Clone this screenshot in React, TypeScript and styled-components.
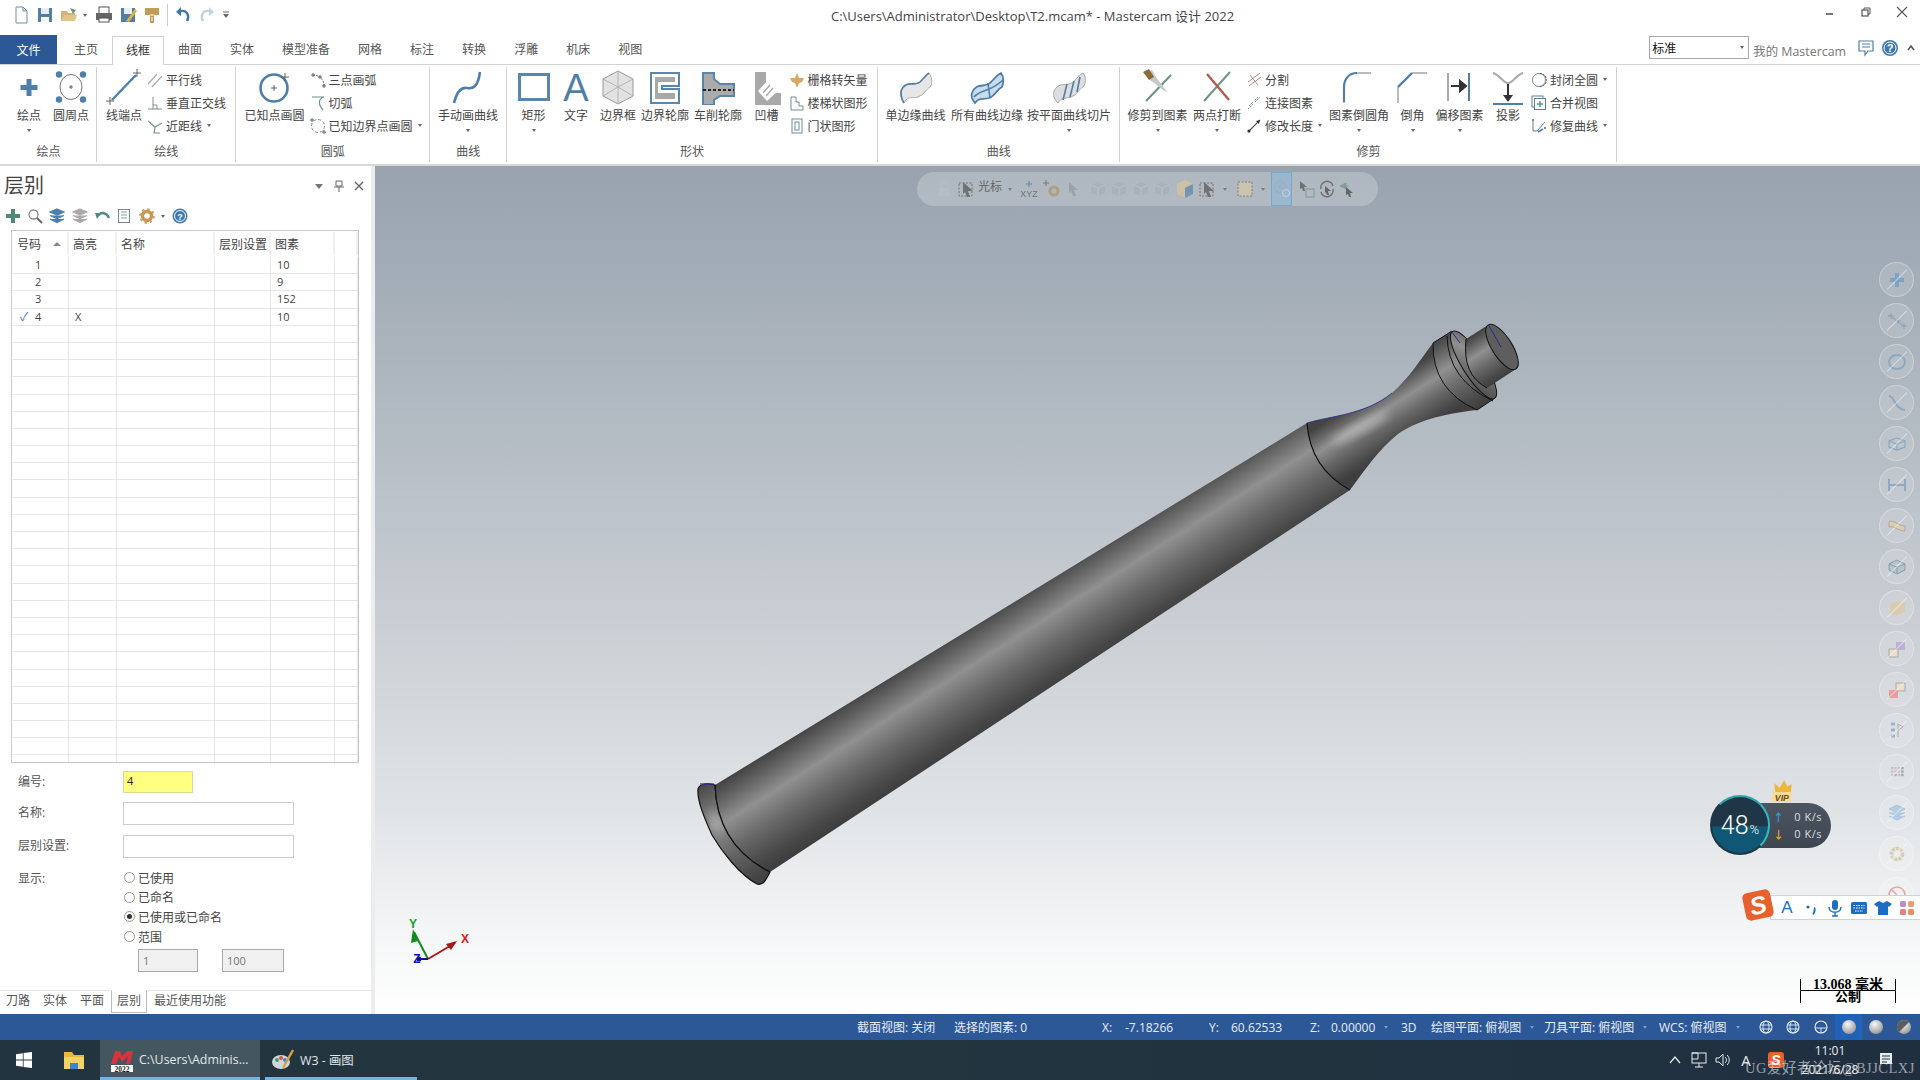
import React from 'react';
import styled, { createGlobalStyle } from 'styled-components';

const Global = createGlobalStyle`
  html, body { margin: 0; padding: 0; background: #fff; }
  * { box-sizing: border-box; }
  #root { width: 1920px; height: 1080px; overflow: hidden; }
`;
const FONT = `"Open Sans", "Noto Sans CJK SC", sans-serif`;

const Root = styled.div`
  width: 1920px; height: 1080px; display: flex; flex-direction: column; overflow: hidden;
  font-family: ${FONT}; font-size: 12px; color: #444; background: #fff;
`;
const TitleBar = styled.div`height: 35px; display: grid; grid-template-columns: 831px 1fr auto; align-items: center;`;
const Quick = styled.div`display: flex; align-items: center; padding-left: 9px; padding-bottom: 5px;`;
const QuickBtn = styled.div<{ $w?: number }>`
  width: ${p => p.$w ?? 24}px; height: 20px; display: flex; align-items: center; justify-content: center;
`;
const QuickSep = styled.div`width: 1px; height: 22px; background: #ccc; margin: 0 3px;`;
const QuickGap = styled.div`width: 3px;`;
const Title = styled.div`font-size: 13px; color: #444; padding-bottom: 5px; white-space: nowrap;`;
const WinCtrls = styled.div`display: flex; padding-bottom: 11px;`;
const WinBtn = styled.div`width: 36px; height: 16px; display: flex; align-items: center; justify-content: center;`;

const TabRow = styled.div`height: 30px; display: flex; align-items: stretch; border-bottom: 1px solid #d2d2d2; position: relative;`;
const FileTab = styled.div`width: 57px; background: #2c5898; color: #fff; display: flex; align-items: center; justify-content: center;`;
const Tabs = styled.div`display: flex; margin-left: 3px;`;
const Tab = styled.div<{ $on?: boolean }>`
  padding: 0 14px 2px; display: flex; align-items: center; white-space: nowrap; color: #555; margin-top: 1px;
  margin-bottom: ${p => (p.$on ? '-1px' : '0')};
  background: #fff;
  ${p => p.$on && 'border: 1px solid #d2d2d2; border-bottom: 0; padding: 0 13px 2px; color:#333;'}
`;
const TabRight = styled.div`margin-left: auto; display: flex; align-items: center;`;
const Combo = styled.div`
  width: 100px; height: 23px; border: 1px solid #a8a8a8; display: flex; align-items: center; justify-content: space-between;
  padding: 0 4px 0 2px; color: #111; margin-top: -4px;
`;
const Caret = styled.span<{ $c?: string }>`
  display: inline-block; width: 0; height: 0; border-left: 2.5px solid transparent; border-right: 2.5px solid transparent;
  border-top: 3px solid ${p => p.$c ?? '#666'};
`;
const MyMc = styled.span`margin: 0 8px 0 4px; font-size: 12.4px; color: #777; padding-top: 2px; white-space: nowrap;`;
const TabIcon = styled.div<{ $w: number }>`width: ${p => p.$w}px; display: flex; justify-content: center; margin-top: -4px;`;

const Ribbon = styled.div`height: 101px; display: flex; border-bottom: 2px solid #d8d8d8; background: #fff;`;
const Group = styled.div<{ $w: number }>`
  width: ${p => p.$w}px; flex: none; display: flex; flex-direction: column; position: relative;
  &::after { content: ''; position: absolute; right: 0; top: 2px; bottom: 2px; width: 1px; background: #d4d4d4; }
`;
const Tools = styled.div<{ $pad?: number }>`height: 79px; display: flex; padding-left: ${p => p.$pad ?? 0}px;`;
const GroupLabel = styled.div`height: 16px; text-align: center; color: #555; line-height: 16px;`;
const Tool = styled.div<{ $w: number }>`
  width: ${p => p.$w}px; flex: none; display: flex; flex-direction: column; align-items: center; padding-top: 4px; white-space: nowrap;
`;
const ToolIcon = styled.div`height: 36px; width: 36px; display: flex; align-items: center; justify-content: center;`;
const ToolLabel = styled.div`height: 16px; line-height: 16px; margin-top: 3px; color: #444;`;
const ToolCaret = styled.div`height: 8px; display: flex; align-items: center; margin-top: 2px;`;
const SmallCol = styled.div<{ $w?: number; $ml?: number }>`
  ${p => p.$w && `width: ${p.$w}px; flex: none;`} margin-left: ${p => p.$ml ?? 0}px; padding-top: 3px; display: flex; flex-direction: column;
`;
const SmallRow = styled.div`height: 23px; display: flex; align-items: center; white-space: nowrap; color: #444;`;
const SmallIcon = styled.div`width: 16px; height: 18px; margin-right: 3px; display: flex; align-items: center; justify-content: center; flex: none;`;
const SmallCaret = styled.span`margin-left: 5px; display: flex;`;

const Main = styled.div`height: 848px; display: flex;`;
const Panel = styled.div`width: 371px; flex: none; display: flex; flex-direction: column; background: #fff;`;
const Splitter = styled.div`width: 4px; flex: none; background: #ececec;`;
const PanelHead = styled.div`height: 37px; display: flex; align-items: center; padding: 2px 0 0 4px;`;
const PanelTitle = styled.div`font-size: 20px; color: #444; line-height: 30px;`;
const PanelCtrls = styled.div`margin-left: auto; display: flex; align-items: center; padding-right: 2px;`;
const PanelCtrl = styled.div`width: 20px; display: flex; justify-content: center; align-items: center;`;
const PanelTools = styled.div`height: 26px; display: flex; align-items: center; padding-left: 2px;`;
const PanelTool = styled.div<{ $w: number }>`width: ${p => p.$w}px; display: flex; justify-content: center;`;
const Table = styled.div`
  margin: 1px 0 0 11px; width: 348px; height: 533px; border: 1px solid #c8c8c8; padding: 1px 0 0 1px; overflow: hidden;
`;
const HeaderRow = styled.div`
  height: 23px; display: grid; grid-template-columns: 56px 48px 98px 56px 64px 23px; margin-bottom: 2px;
`;
const HeaderCell = styled.div`
  display: flex; align-items: center; padding-left: 4px; border-right: 2px solid #f0f0f0; color: #444; white-space: nowrap;
  justify-content: space-between; padding-right: 6px;
`;
const DataRow = styled.div`
  height: 17.2px; display: grid; grid-template-columns: 56px 48px 98px 56px 64px 23px; border-bottom: 1px solid #e6e6e6;
`;
const DataCell = styled.div<{ $pl?: number }>`
  border-right: 1px solid #e6e6e6; font-size: 11px; line-height: 16px; color: #444; padding-left: ${p => p.$pl ?? 0}px; position: relative;
`;
const Check = styled.span`position: absolute; left: 7px; top: 1px; color: #4f7fa8; font-size: 12px; line-height: 14px;`;
const Form = styled.div`display: grid; grid-template-columns: 123px 1fr; padding-left: 18px; grid-auto-rows: min-content; margin-top: 8px; position: relative;`;
const FormLabel = styled.div<{ $h: number }>`height: ${p => p.$h}px; color: #555; line-height: 21px;`;
const FormField = styled.div<{ $h: number }>`height: ${p => p.$h}px; margin-left: -18px;`;
const Input = styled.div<{ $w: number; $y?: boolean }>`
  width: ${p => p.$w}px; height: ${p => (p.$y ? 22 : 23)}px; border: 1px solid ${p => (p.$y ? '#d8d8a0' : '#ccc')};
  background: ${p => (p.$y ? '#ffff80' : '#fff')}; padding: 0 3px; font-size: 11px; line-height: 18px; color: #222;
`;
const Radios = styled.div`display: flex; flex-direction: column;`;
const RadioRow = styled.div`height: 19.6px; display: flex; align-items: center; color: #444;`;
const Radio = styled.span<{ $on?: boolean }>`
  width: 11px; height: 11px; border-radius: 50%; border: 1px solid #999; background: #fff; margin: 0 3px 0 1px; display: flex; align-items: center; justify-content: center; flex: none;
  &::after { content: ''; width: 5px; height: 5px; border-radius: 50%; background: ${p => (p.$on ? '#333' : 'transparent')}; }
`;
const RangeRow = styled.div`display: flex; gap: 24px; margin: 3px 0 0 15px;`;
const RangeInput = styled.div<{ $w: number }>`
  width: ${p => p.$w}px; height: 23px; border: 1px solid #aaa; background: #f0f0f0; color: #777; font-size: 11px; line-height: 21px; padding-left: 4px;
`;
const PanelTabs = styled.div`margin-top: auto; height: 24px; border-top: 1px solid #e6e6e6; display: flex; padding-left: 6px;`;
const PanelTab = styled.div<{ $on?: boolean; $ml: number }>`
  margin-left: ${p => p.$ml}px; height: ${p => (p.$on ? 23 : 21)}px; line-height: 20px; color: #555; white-space: nowrap;
  ${p => p.$on && 'border: 1px solid #bbb; border-top: 1px solid #fff; padding: 0 5px; margin-top:-1px; width: 36px;'}
`;

const Viewport = styled.div`
  flex: 1; position: relative; overflow: hidden;
  background: linear-gradient(180deg, #98a3ae 0%, #b2bac2 30%, #c8cdd3 52%, #e0e3e6 76%, #f4f5f6 90%, #ffffff 100%);
`;
const Canvas = styled.svg`position: absolute; left: 0; top: -1px; width: 1545px; height: 849px;`;
const FloatBar = styled.div`
  position: absolute; left: 542px; top: 6px; width: 461px; height: 34px; border-radius: 17px; background: rgba(255,255,255,.22);
  display: flex; align-items: center; padding-left: 16px; color: #666;
`;
const FloatIcon = styled.div<{ $w: number; $on?: boolean }>`
  width: ${p => p.$w}px; height: 34px; display: flex; align-items: center; justify-content: center; flex: none; opacity: .7;
  ${p => p.$on && 'background: rgba(130,180,220,.45); border: 1px solid #7aa7cc; opacity: 1;'}
`;
const FloatGap = styled.div<{ $w: number }>`width: ${p => p.$w}px; flex: none;`;
const FloatText = styled.span`font-size: 12px; color: #666; white-space: nowrap; margin: -6px 0 0 2px;`;
const Rail = styled.div`position: absolute; right: 6px; top: 96px; display: flex; flex-direction: column; gap: 6px;`;
const RailBtn = styled.div`
  width: 35px; height: 35px; border-radius: 50%; background: rgba(255,255,255,.13); border: 1px solid rgba(255,255,255,.28);
  position: relative; display: flex; align-items: center; justify-content: center; flex: none;
  &::after { content: ''; position: absolute; left: 3px; top: 16px; width: 28px; height: 1px; background: rgba(255,255,255,.45); transform: rotate(-45deg); }
`;
const NetWidget = styled.div`position: absolute; left: 1335px; top: 629px; width: 125px; height: 60px;`;
const NetPill = styled.div`
  position: absolute; left: 30px; top: 8px; width: 91px; height: 45px; border-radius: 0 23px 23px 0; background: linear-gradient(#4c5561, #3e4650);
  color: #d8dde2; font-size: 11px; letter-spacing: .5px;
`;
const NetRow = styled.div<{ $top: number }>`position: absolute; right: 9px; top: ${p => p.$top}px; line-height: 17px; white-space: nowrap;`;
const NetArrow = styled.div<{ $top: number; $c: string }>`position: absolute; left: 33px; top: ${p => p.$top}px; color: ${p => p.$c}; font-size: 11px; line-height: 17px; font-weight: 700;`;
const NetCircle = styled.div`
  position: absolute; left: 0; top: 0; width: 60px; height: 60px; border-radius: 50%; overflow: hidden;
  background: linear-gradient(180deg, #1e3646 0%, #1e3646 52%, #0f5775 53%, #0f5775 100%); border: 2px solid #1e3646;
  border-right-color: #2fbcc0; border-top-color: #2fa6ae; color: #fff; display: flex; align-items: center; justify-content: center;
`;
const NetPct = styled.span`font-size: 25px; font-family: "Roboto", sans-serif; font-weight: 300; small { font-size: 13px; margin-left: 1px; }`;
const Crown = styled.svg`position: absolute; left: 62px; top: -15px;`;
const ImeBar = styled.div`
  position: absolute; right: 0; top: 729px; width: 150px; height: 25px; background: #fff; border: 1px solid #c8d4e0; border-right: 0;
  display: flex; align-items: center; padding-left: 4px; color: #1a6fc4;
`;
const ImeLogo = styled.div`
  position: absolute; left: 1369px; top: 725px; width: 28px; height: 28px; background: #e8602c; border-radius: 5px; transform: rotate(-12deg);
  color: #fff; font: italic 700 25px/28px "Liberation Sans", sans-serif; text-align: center;
`;
const ImeItem = styled.div<{ $w: number }>`width: ${p => p.$w}px; display: flex; justify-content: center; align-items: center; flex: none; font-size: 17px; font-family: "Liberation Sans", sans-serif;`;
const ScaleBox = styled.div`
  position: absolute; left: 1425px; top: 813px; width: 96px; height: 24px; border-left: 1px solid #000; border-right: 1px solid #000;
  display: flex; flex-direction: column; font: 700 14px/11px "Liberation Serif", "Noto Sans CJK SC", serif; color: #000; text-align: center;
`;
const ScaleTop = styled.div`height: 12px; border-bottom: 1px solid #000; white-space: nowrap;`;
const ScaleBot = styled.div`height: 12px; line-height: 12px; font-size: 13px;`;

const Status = styled.div`height: 26px; background: #2c5898; color: #e8eef6; display: flex; align-items: center; padding-left: 857px; white-space: nowrap;`;
const StatusCell = styled.div<{ $w: number }>`width: ${p => p.$w}px; flex: none; display: flex; align-items: center;`;
const StatusKey = styled.span<{ $w: number }>`width: ${p => p.$w}px; flex: none;`;
const StatusCaret = styled(Caret)`margin-left: 9px;`;
const GlobeBtn = styled.div<{ $on?: boolean }>`
  width: 27.6px; height: 26px; flex: none; display: flex; align-items: center; justify-content: center;
  ${p => p.$on && 'background: #1f62b8;'}
`;
const Taskbar = styled.div`height: 40px; background: linear-gradient(90deg, #22343f, #23363f 40%, #1f2f40); display: flex; align-items: stretch; color: #e4e8ea; position: relative;`;
const TaskIcon = styled.div<{ $w: number }>`width: ${p => p.$w}px; flex: none; display: flex; align-items: center; justify-content: center;`;
const TaskItem = styled.div<{ $w: number; $on?: boolean }>`
  width: ${p => p.$w}px; flex: none; display: flex; align-items: center; white-space: nowrap; gap: 5px; font-size: 12.4px;
  padding-left: ${p => (p.$on ? 10 : 6)}px; margin-right: ${p => (p.$on ? 5 : 0)}px;
  background: ${p => (p.$on ? '#44565f' : 'transparent')}; border-bottom: 3px solid #72b4e6; padding-top: 2px;
`;
const Tray = styled.div`margin-left: auto; display: flex; align-items: center; padding-right: 14px;`;
const TrayIcon = styled.div<{ $w: number }>`width: ${p => p.$w}px; flex: none; display: flex; justify-content: center; align-items: center;`;
const TrayLetter = styled.span`font-size: 15px;`;
const Clock = styled.div`width: 72px; text-align: center; line-height: 19px; font-size: 12px; color: #e8ecee; white-space: nowrap;`;
const Watermark = styled.div`
  position: absolute; right: 5px; top: 18px; font: 14.5px/20px "Liberation Serif", "Noto Sans CJK SC", serif; color: rgba(235,235,235,.6); letter-spacing: .5px; white-space: nowrap;
`;

const B = '#4f7fa8';
const BD = '#5a86ac';
const GN = '#6d9486';

type I = { s?: number; children?: React.ReactNode; v?: number };
const Sv = ({ s = 16, v, children }: I) => (
  <svg width={s} height={s} viewBox={`0 0 ${v ?? s} ${v ?? s}`} fill="none">{children}</svg>
);
const CrossAt = ({ x, y, r = 3, c = '#555' }: { x: number; y: number; r?: number; c?: string }) => (
  <path d={`M${x - r} ${y}H${x + r}M${x} ${y - r}V${y + r}`} stroke={c} strokeWidth=".9" />
);

const big: Record<string, React.ReactNode> = {
  plus: <path d="M15.5 10h5v6h6v5h-6v6h-5v-6h-6v-5h6z" fill={B} />,
  circlePts: <>
    <ellipse cx="18" cy="18" rx="11" ry="12.5" stroke="#777" />
    <CrossAt x={18} y={18} r={2} />
    {[[6, 5.5], [30, 5.5], [6, 30.5], [30, 30.5]].map(([x, y], i) => <circle key={i} cx={x} cy={y} r="3.2" fill={B} />)}
  </>,
  lineEnd: <>
    <path d="M6 31L30 6" stroke={B} strokeWidth="2.4" />
    <CrossAt x={4} y={32} r={4} /><CrossAt x={31} y={4} r={4} />
  </>,
  circleKnown: <>
    <circle cx="17" cy="19" r="13.5" stroke={B} strokeWidth="2.6" />
    <CrossAt x={17} y={19} r={3} /><CrossAt x={28} y={8} r={4} />
  </>,
  curve: <path d="M4 34C7 22 12 18 17 19C23 20 28 18 30 3" stroke={B} strokeWidth="2.6" />,
  rect: <rect x="3.5" y="5.5" width="29" height="25" stroke={BD} strokeWidth="3" />,
  text: <text x="18" y="32" textAnchor="middle" fontFamily="Liberation Sans" fontSize="38" fill={B}>A</text>,
  cube: <>
    <path d="M18 2L33 10V27L18 35L3 27V10Z" fill="#e2e2e2" stroke="#999" />
    <path d="M18 18L33 10M18 18L3 10M18 18V35M18 2V18M3 27L18 18L33 27" stroke="#aaa" strokeWidth=".8" />
  </>,
  border: <>
    <path d="M4 4H32V17H15V20H32V34H4Z" fill="none" stroke={BD} strokeWidth="2" />
    <path d="M8 8H28V13H11V24H28V30H8Z" fill="#a8a8a8" />
  </>,
  lathe: <>
    <path d="M3 4H14V10L20 15H34V27H20L14 31V36H3Z" fill="#ababab" stroke={BD} strokeWidth="2" />
    <path d="M3 21H34" stroke="#222" strokeWidth="2" strokeDasharray="3 2" />
  </>,
  groove: <>
    <path d="M6 3H17V17L22 24H32V36H6Z" fill="#a9a9a9" />
    <path d="M19 11L30 21L18 32L9 22Z" fill="#fff" />
    <path d="M14 24L21 16M17 27L24 19" stroke="#aaa" strokeWidth="1.4" />
  </>,
  surf1: <>
    <path d="M3 22C8 10 16 18 22 13C26 9 28 6 31 4C34 8 34 12 33 17C28 20 26 26 20 28C14 30 10 26 6 34C3 30 2 26 3 22Z" fill="#e6e6e6" stroke="#aaa" />
    <path d="M3 22C8 10 16 18 22 13C26 9 28 6 31 4" stroke={B} strokeWidth="1.6" />
    <path d="M3 22C3 26 3 30 6 34" stroke={B} strokeWidth="1.6" />
  </>,
  surf2: <>
    <path d="M3 24C8 12 16 20 22 13C26 9 28 6 32 4C35 8 35 12 33 18C28 20 26 27 20 29C14 31 10 28 6 34C3 30 2 28 3 24Z" fill="#c9dcec" stroke={B} strokeWidth="1.8" />
    <path d="M5 28C12 20 20 24 34 11M19 14L21 29" stroke={B} strokeWidth="1.6" />
  </>,
  surf3: <>
    <path d="M3 22C8 12 16 18 22 13C26 9 28 6 32 4C35 8 35 12 33 17C28 20 26 26 20 28C14 30 10 28 7 34C3 30 2 26 3 22Z" fill="#dedede" stroke="#aaa" />
    <path d="M12 31L16 15M19 28L23 12M26 23L29 8" stroke={B} strokeWidth="1.6" />
  </>,
  trim: <>
    <path d="M6 32L31 6" stroke={GN} strokeWidth="2" />
    <path d="M6 3L12 1L16 8L28 24L23 21L10 11Z" fill="#c9c9c9" />
    <path d="M3 3L9 0L14 8L9 11Z" fill="#8c6a3a" />
  </>,
  trim2: <>
    <path d="M5 32L31 3" stroke={GN} strokeWidth="2" />
    <path d="M8 5L30 31" stroke="#b35a4a" strokeWidth="2.4" />
  </>,
  fillet: <>
    <path d="M3 33V18C3 10 8 4 16 4" stroke={B} strokeWidth="2.2" />
    <path d="M3 34V20" stroke="#777" /><path d="M16 4H30" stroke="#777" />
  </>,
  chamfer: <>
    <path d="M3 18L17 4" stroke={B} strokeWidth="2.4" />
    <path d="M3 34V18M17 4H32" stroke="#777" />
  </>,
  offset: <>
    <path d="M6 4V32" stroke="#aaa" strokeWidth="2" />
    <path d="M27 4V32" stroke={B} strokeWidth="2" />
    <path d="M9 17H20M18 12L24 17L18 22Z" stroke="#333" strokeWidth="2" fill="#333" />
  </>,
  project: <>
    <path d="M3 4C10 6 13 14 18 14C23 14 26 6 33 4" stroke="#aaa" strokeWidth="2" />
    <path d="M18 15V27" stroke="#333" strokeWidth="2" />
    <path d="M13 26H23L18 33Z" fill="#333" />
    <path d="M3 35H33" stroke={B} strokeWidth="2" />
  </>,
};

const small: Record<string, React.ReactNode> = {
  parallel: <path d="M1 12L10 2M5 15L15 4" stroke="#aaa" strokeWidth="1.2" />,
  perp: <><path d="M1 14H15" stroke={GN} /><path d="M6 2V14" stroke="#888" /><path d="M6 10H10V14" stroke="#666" strokeWidth=".7" /></>,
  near: <path d="M1 3L8 9L15 5M8 9L7 15L13 15" stroke={GN} strokeWidth="1.1" />,
  arc3: <><path d="M3 3C10 3 14 8 14 14" stroke="#777" strokeDasharray="2 1" /><CrossAt x={3} y={3} r={2} /><CrossAt x={10} y={5} r={2} /><CrossAt x={14} y={14} r={2} /></>,
  tangent: <path d="M2 2H14M14 2C8 4 8 9 13 15" stroke="#6f8d93" strokeWidth="1.2" />,
  circleB: <><circle cx="8" cy="8" r="6.5" stroke="#6d9486" strokeDasharray="3 2" /><CrossAt x={2} y={2} r={2} /><CrossAt x={14} y={14} r={2} /></>,
  raster: <path d="M8 1L10 6L15 6L13 10L10 11L8 16L6 11L3 10L1 6L6 6Z" fill="#d6a860" />,
  stairs: <path d="M2 2H7V7H10V11H14V15H2Z" stroke="#6f8d93" />,
  door: <><rect x="3" y="1" width="10" height="14" stroke="#6f8d93" /><rect x="6" y="4" width="4" height="8" stroke="#6f8d93" /></>,
  split: <path d="M2 10L14 1M3 14L15 5M4 3L12 13" stroke="#b98a7a" strokeWidth="1" />,
  connect: <path d="M2 14L7 9M9 7L14 2M3 11L7 7M9 5L12 2" stroke={GN} strokeDasharray="2 1" />,
  modify: <><path d="M2 14L14 2" stroke="#555" strokeWidth="1.1" /><circle cx="3" cy="13" r="1.6" fill="#333" /><path d="M14 2L10 3L13 6Z" fill="#333" /></>,
  closeC: <><circle cx="8" cy="8" r="6.5" stroke="#6f8d93" /><path d="M9 1.5A6.5 6.5 0 0 1 9 14.5" stroke="#555" strokeDasharray="2 1" /></>,
  merge: <><rect x="1" y="1" width="11" height="11" stroke="#5d7f8f" /><rect x="3.5" y="3.5" width="11" height="11" fill="#fff" stroke="#5d7f8f" /><path d="M9 6V12M6 9H12" stroke="#4d9a76" strokeWidth="1.4" /></>,
  repair: <><path d="M2 2V13H6L14 4" stroke="#5d7f8f" /><rect x="1" y="1" width="2" height="2" fill="#888" /><rect x="13" y="9" width="2" height="2" fill="#888" /><path d="M7 14L12 11" stroke={B} strokeWidth="2" /></>,
};

const BigI = ({ n }: { n: string }) => <ToolIcon><Sv s={36}>{big[n]}</Sv></ToolIcon>;
const SmallI = ({ n }: { n: string }) => <SmallIcon><Sv s={16}>{small[n]}</Sv></SmallIcon>;
const T = ({ w, n, l, c }: { w: number; n: string; l: string; c?: boolean }) => (
  <Tool $w={w}>
    <BigI n={n} />
    <ToolLabel>{l}</ToolLabel>
    {c && <ToolCaret><Caret /></ToolCaret>}
  </Tool>
);
const S = ({ n, l, c }: { n: string; l: string; c?: boolean }) => (
  <SmallRow><SmallI n={n} />{l}{c && <SmallCaret><Caret /></SmallCaret>}</SmallRow>
);

const ShaftStops = () => <>
  <stop offset="0" stopColor="#444" />
  <stop offset=".12" stopColor="#5c5c5c" />
  <stop offset=".36" stopColor="#909090" />
  <stop offset=".62" stopColor="#686868" />
  <stop offset=".88" stopColor="#484848" />
  <stop offset="1" stopColor="#3e3e3e" />
</>;
const AxisGrad = ({ id, hw, cx, cy }: { id: string; hw: number; cx: number; cy: number }) => (
  <linearGradient id={id} gradientUnits="userSpaceOnUse" x1={cx - hw * .536} y1={cy - hw * .844} x2={cx + hw * .536} y2={cy + hw * .844}>
    <ShaftStops />
  </linearGradient>
);
const Rot = 57.6;

const Model = () => (
  <Canvas viewBox="375 165 1545 849" fill="none">
    <defs>
      <AxisGrad id="gShaft" hw={50} cx={742} cy={828} />
      <AxisGrad id="gFlange" hw={60} cx={742} cy={828} />
      <AxisGrad id="gCove" hw={30} cx={1380} cy={423} />
      <AxisGrad id="gCollar" hw={40} cx={1455} cy={376} />
      <AxisGrad id="gPin" hw={26} cx={1480} cy={362} />
      <filter id="soft" x="-50%" y="-50%" width="200%" height="200%"><feGaussianBlur stdDeviation="4" /></filter>
    </defs>
    {/* flange */}
    <path d="M715 785C708 783 700 783 698 789C697 800 703 815 712 835C722 852 740 875 757 884C763 886 766 880 770 872Q717 845 715 785Z" fill="url(#gFlange)" stroke="#111" strokeWidth="1.2" />
    <ellipse cx="716" cy="822" rx="3" ry="12" fill="#b5b5b5" filter="url(#soft)" transform="rotate(-25 716 822)" />
    <path d="M700 784L714 784" stroke="#3030b0" strokeWidth="1.2" />
    {/* shaft */}
    <path d="M715 785L1307 423Q1310 468 1350 490L770 872Q717 845 715 785Z" fill="url(#gShaft)" />
    <path d="M715 785Q717 845 770 872" stroke="#111" strokeWidth="1.2" />
    {/* cove */}
    <path d="M1307 423C1330 416 1365 415 1392 393C1410 377 1420 360 1433 343L1477 410C1440 414 1415 422 1398 434C1378 450 1365 470 1350 490Q1310 468 1307 423Z" fill="url(#gCove)" />
    <ellipse cx="1360" cy="428" rx="32" ry="5" fill="#c4c4c4" opacity=".7" filter="url(#soft)" transform="rotate(-28 1360 428)" />
    <path d="M1307 423C1330 416 1365 415 1392 393" stroke="#2a2a90" strokeWidth=".8" />
    <path d="M1307 423Q1310 468 1350 490" stroke="#111" strokeWidth="1.2" />
    {/* collar */}
    <path d="M1433 343L1452 331L1495 398L1477 410Q1432 390 1433 343Z" fill="url(#gCollar)" stroke="#111" strokeWidth="1" />
    <path d="M1447 336Q1448 380 1493 401" stroke="#111" />
    <ellipse cx="1473.5" cy="365" rx="39.5" ry="11" fill="url(#gCollar)" stroke="#111" transform={`rotate(${Rot} 1473.5 365)`} />
    <path d="M1452 332L1460 343" stroke="#2a2a90" />
    {/* pin */}
    <path d="M1488 325L1466 339Q1462 375 1487 388L1516 369Z" fill="url(#gPin)" />
    <path d="M1466 339Q1462 375 1487 388" stroke="#111" />
    <ellipse cx="1502" cy="347" rx="26" ry="10" fill="#5e5e5e" stroke="#111" transform={`rotate(${Rot} 1502 347)`} />
    <path d="M1489 326L1501 347" stroke="#2a2a90" />
    {/* triad */}
    <path d="M428 959L414 932" stroke="#128a1e" strokeWidth="2" />
    <path d="M413 929L418 941L411 943Z" fill="#128a1e" />
    <path d="M428 959L455 943" stroke="#a81818" strokeWidth="2" />
    <path d="M457 941L451 950L446 944Z" fill="#a81818" />
    <path d="M428 959H417" stroke="#10108a" strokeWidth="2" />
    <circle cx="419" cy="959" r="2.5" fill="#10108a" />
    <text x="413" y="928" fontSize="12" fontWeight="700" fill="#12a01e" textAnchor="middle" fontFamily="Liberation Sans">Y</text>
    <text x="465" y="943" fontSize="12" fontWeight="700" fill="#d81818" textAnchor="middle" fontFamily="Liberation Sans">X</text>
    <text x="417" y="963" fontSize="12" fontWeight="700" fill="#1010c0" textAnchor="middle" fontFamily="Liberation Sans">Z</text>
  </Canvas>
);

const rail: React.ReactNode[] = [
  <path d="M10 5h4v5h5v4h-5v5h-4v-5H5v-4h5z" fill="#7fa3c2" />,
  <><path d="M4 6L20 18" stroke="#8aa0b2" /><CrossAt x={6} y={7} r={3} c="#8aa0b2" /><CrossAt x={13} y={12} r={3} c="#8aa0b2" /><CrossAt x={19} y={17} r={3} c="#8aa0b2" /></>,
  <ellipse cx="12" cy="12" rx="8" ry="7" stroke="#8ea9c0" strokeWidth="2" />,
  <path d="M4 5C10 5 10 19 20 19" stroke="#8ea9c0" strokeWidth="2" />,
  <path d="M12 6L20 9V15L12 18L4 15V9ZM4 9L12 12L20 9M12 12V18" stroke="#8ea9c0" strokeWidth="1.2" />,
  <path d="M4 6V18M20 6V18M4 12H20" stroke="#8ea9c0" strokeWidth="2" />,
  <path d="M4 8C9 5 13 12 20 12V17C13 17 9 11 4 13Z" fill="#d9cdb2" stroke="#b5a98f" />,
  <path d="M12 5L20 9V15L12 19L4 15V9ZM4 9L12 12L20 9M12 12V19" stroke="#8a9cae" fill="#b7c3ce" strokeWidth="1" />,
  <path d="M5 8L14 5L20 7V16L11 20L5 17Z" fill="#d8cdb2" />,
  <><rect x="11" y="5" width="9" height="8" fill="#bcb0dc" /><rect x="4" y="12" width="9" height="8" fill="#e8dfc8" stroke="#aaa" /></>,
  <><rect x="11" y="5" width="9" height="8" fill="#e8dfc8" stroke="#aaa" /><rect x="4" y="12" width="9" height="8" fill="#ec9ca0" /></>,
  <><path d="M6 5h4M6 11h4M6 17h4" stroke="#9db4c8" strokeWidth="3" /><path d="M13 5V18M13 5L18 8L13 11" stroke="#aaa" /></>,
  <>{[0, 1, 2, 3].map(x => [0, 1, 2].map(y => <rect key={`${x}${y}`} x={6 + x * 3.4} y={7 + y * 3.4} width="2.4" height="2.4" fill={y === 2 && x === 1 ? '#c9a2c4' : x === 3 ? '#9aa' : '#c8c2c8'} />))}</>,
  <path d="M12 4L20 8L12 12L4 8ZM4 11.5L12 15.5L20 11.5M4 15L12 19L20 15" fill="#b5cde2" stroke="#a9c4dc" />,
  <><circle cx="12" cy="12" r="5.5" stroke="#d8cdb2" strokeWidth="3.5" strokeDasharray="3 1" /></>,
  <><circle cx="12" cy="12" r="8" stroke="#e4a8a0" strokeWidth="1.6" /><path d="M6 6L18 18" stroke="#e4a8a0" strokeWidth="1.6" /></>,
];

const Globe = ({ v }: { v: number }) => (
  <Sv s={16}>
    <circle cx="8" cy="8" r="6" stroke="#e6eef8" strokeWidth="1.1" />
    {v < 2 && <ellipse cx="8" cy="8" rx="3" ry="6" stroke="#e6eef8" strokeWidth=".9" />}
    <path d={v === 2 ? 'M2 9H14M8 9V14' : 'M2.4 6H13.6M2.4 10H13.6'} stroke="#e6eef8" strokeWidth=".9" />
  </Sv>
);
const Sphere = ({ id, half }: { id: string; half?: boolean }) => (
  <Sv s={16}>
    <defs><radialGradient id={id} cx=".4" cy=".3" r=".8"><stop offset="0" stopColor="#f6f6f6" /><stop offset="1" stopColor="#8f8f8f" /></radialGradient></defs>
    <circle cx="8" cy="8" r="7" fill={`url(#${id})`} />
    {half && <path d="M13 3L3 13A7 7 0 0 1 13 3Z" fill="#5c5c5c" />}
  </Sv>
);
const FloatCube = () => <Sv s={18}><path d="M9 2L16 5V13L9 16L2 13V5Z" fill="#a8b0b8" /><path d="M2 5L9 8L16 5M9 8V16" stroke="#bcc3ca" /></Sv>;
const FloatSelect = () => <Sv s={18}><rect x="2" y="3" width="13" height="13" stroke="#555" strokeDasharray="2 1.5" /><path d="M6 2L16 11H11L13 17L10 17L8 12L6 14Z" fill="#555" /></Sv>;

const rows = [['1', '', '10'], ['2', '', '9'], ['3', '', '152'], ['4', 'X', '10']];
const blank = Array.from({ length: 26 });

export default function App() {
  return (
    <Root>
      <Global />
      <TitleBar>
        <Quick>
          <QuickBtn><Sv s={18}><path d="M4 1H11L15 5V17H4Z" fill="#fff" stroke="#6d8fa8" /><path d="M11 1V5H15" stroke="#6d8fa8" /></Sv></QuickBtn>
          <QuickBtn><Sv s={18}><path d="M2 2H16V16H2Z" fill="#4f7fa8" /><rect x="5" y="2" width="8" height="6" fill="#e8eef4" /><rect x="5" y="11" width="8" height="5" fill="#fff" /></Sv></QuickBtn>
          <QuickBtn><Sv s={18}><path d="M1 5H7L8 7H15V15H1Z" fill="#d3b377" /><path d="M10 2L16 4L13 8Z" fill="#6d9a76" /><path d="M1 15L4 9H17L15 15Z" fill="#e2c48c" /></Sv></QuickBtn>
          <QuickBtn $w={8}><Caret /></QuickBtn>
          <QuickGap />
          <QuickBtn><Sv s={18}><rect x="4" y="1" width="10" height="7" fill="#fff" stroke="#555" /><rect x="1" y="7" width="16" height="7" fill="#666" /><rect x="4" y="12" width="10" height="4" fill="#fff" stroke="#555" /></Sv></QuickBtn>
          <QuickBtn><Sv s={18}><path d="M2 2H16V16H2Z" fill="#4f7fa8" /><rect x="5" y="2" width="8" height="6" fill="#e8eef4" /><path d="M7 15L16 3L18 5L10 16Z" fill="#e0b040" /></Sv></QuickBtn>
          <QuickBtn><Sv s={18}><path d="M2 2H16V9H11V17H7V9H2Z" fill="#c49a55" /><path d="M7 9H11M8 12H10M8 14H10" stroke="#fff" /></Sv></QuickBtn>
          <QuickSep />
          <QuickBtn><Sv s={18}><path d="M13 15C16 10 13 4 7 5L4 6" stroke="#3f78ad" strokeWidth="2.4" /><path d="M2 6L7 1V10Z" fill="#3f78ad" /></Sv></QuickBtn>
          <QuickBtn><Sv s={18}><path d="M5 15C2 10 5 4 11 5L14 6" stroke="#c2d2df" strokeWidth="2.4" /><path d="M16 6L11 1V10Z" fill="#c2d2df" /></Sv></QuickBtn>
          <QuickBtn $w={14}><Sv s={8}><path d="M1 1H7" stroke="#666" /><path d="M1 3H7L4 7Z" fill="#666" /></Sv></QuickBtn>
        </Quick>
        <Title>C:\Users\Administrator\Desktop\T2.mcam* - Mastercam 设计 2022</Title>
        <WinCtrls>
          <WinBtn><Sv s={12}><path d="M2 8H9" stroke="#555" strokeWidth="1.6" /></Sv></WinBtn>
          <WinBtn><Sv s={12}><rect x="2" y="4" width="6" height="6" stroke="#555" strokeWidth="1.2" /><path d="M4 4V2H10V8H8" stroke="#555" /></Sv></WinBtn>
          <WinBtn><Sv s={12}><path d="M1 1L11 11M11 1L1 11" stroke="#555" strokeWidth="1.1" /></Sv></WinBtn>
        </WinCtrls>
      </TitleBar>

      <TabRow>
        <FileTab>文件</FileTab>
        <Tabs>
          {['主页', '线框', '曲面', '实体', '模型准备', '网格', '标注', '转换', '浮雕', '机床', '视图'].map(t => (
            <Tab key={t} $on={t === '线框'}>{t}</Tab>
          ))}
        </Tabs>
        <TabRight>
          <Combo>标准<Caret /></Combo>
          <MyMc>我的 Mastercam</MyMc>
          <TabIcon $w={24}><Sv s={18}><path d="M2 2H16V12H11L8 16V12H2Z" stroke="#4f7fa8" strokeWidth="1.2" /><path d="M5 5H13M5 8H13" stroke="#4f7fa8" /></Sv></TabIcon>
          <TabIcon $w={24}><Sv s={18}><circle cx="9" cy="9" r="8" fill="#3f78ad" /><circle cx="9" cy="9" r="6" fill="#3f78ad" stroke="#fff" /><text x="9" y="13" textAnchor="middle" fontSize="11" fontWeight="700" fill="#fff" fontFamily="Liberation Sans">?</text></Sv></TabIcon>
          <TabIcon $w={18}><Sv s={10}><path d="M2 7L5 3L8 7" stroke="#555" strokeWidth="1.6" /></Sv></TabIcon>
        </TabRight>
      </TabRow>

      <Ribbon>
        <Group $w={97}>
          <Tools $pad={4}><T w={50} n="plus" l="绘点" c /><T w={34} n="circlePts" l="圆周点" /></Tools>
          <GroupLabel>绘点</GroupLabel>
        </Group>
        <Group $w={138.5}>
          <Tools $pad={4}>
            <T w={46} n="lineEnd" l="线端点" />
            <SmallCol><S n="parallel" l="平行线" /><S n="perp" l="垂直正交线" /><S n="near" l="近距线" c /></SmallCol>
          </Tools>
          <GroupLabel>绘线</GroupLabel>
        </Group>
        <Group $w={194.5}>
          <Tools $pad={4}>
            <T w={70} n="circleKnown" l="已知点画圆" />
            <SmallCol><S n="arc3" l="三点画弧" /><S n="tangent" l="切弧" /><S n="circleB" l="已知边界点画圆" c /></SmallCol>
          </Tools>
          <GroupLabel>圆弧</GroupLabel>
        </Group>
        <Group $w={76.5}>
          <Tools><T w={76} n="curve" l="手动画曲线" c /></Tools>
          <GroupLabel>曲线</GroupLabel>
        </Group>
        <Group $w={371}>
          <Tools $pad={6}>
            <T w={42} n="rect" l="矩形" c /><T w={43} n="text" l="文字" /><T w={41} n="cube" l="边界框" />
            <T w={53} n="border" l="边界轮廓" /><T w={53} n="lathe" l="车削轮廓" /><T w={44} n="groove" l="凹槽" />
            <SmallCol><S n="raster" l="栅格转矢量" /><S n="stairs" l="楼梯状图形" /><S n="door" l="门状图形" /></SmallCol>
          </Tools>
          <GroupLabel>形状</GroupLabel>
        </Group>
        <Group $w={242.5}>
          <Tools $pad={6}><T w={64} n="surf1" l="单边缘曲线" /><T w={79} n="surf2" l="所有曲线边缘" /><T w={85} n="surf3" l="按平面曲线切片" c /></Tools>
          <GroupLabel>曲线</GroupLabel>
        </Group>
        <Group $w={497}>
          <Tools $pad={4}>
            <T w={67} n="trim" l="修剪到图素" c /><T w={52} n="trim2" l="两点打断" c />
            <SmallCol $w={81} $ml={3}><S n="split" l="分割" /><S n="connect" l="连接图素" /><S n="modify" l="修改长度" c /></SmallCol>
            <T w={64} n="fillet" l="图素倒圆角" c /><T w={43} n="chamfer" l="倒角" c /><T w={51} n="offset" l="偏移图素" c /><T w={46} n="project" l="投影" />
            <SmallCol><S n="closeC" l="封闭全圆" c /><S n="merge" l="合并视图" /><S n="repair" l="修复曲线" c /></SmallCol>
          </Tools>
          <GroupLabel>修剪</GroupLabel>
        </Group>
      </Ribbon>

      <Main>
        <Panel>
          <PanelHead>
            <PanelTitle>层别</PanelTitle>
            <PanelCtrls>
              <PanelCtrl><Sv s={10}><path d="M1 3H9L5 8Z" fill="#777" /></Sv></PanelCtrl>
              <PanelCtrl><Sv s={12}><path d="M3 1H9V6H3ZM1 7H11M6 7V12" stroke="#666" /></Sv></PanelCtrl>
              <PanelCtrl><Sv s={12}><path d="M2 2L10 10M10 2L2 10" stroke="#666" strokeWidth="1.4" /></Sv></PanelCtrl>
            </PanelCtrls>
          </PanelHead>
          <PanelTools>
            <PanelTool $w={22}><Sv s={16}><path d="M6 1h4v5h5v4h-5v5H6v-5H1V6h5z" fill="#4d8a76" /></Sv></PanelTool>
            <PanelTool $w={22}><Sv s={16}><circle cx="6.5" cy="6.5" r="4.5" stroke="#888" strokeWidth="1.3" /><path d="M10 10L15 15" stroke="#666" strokeWidth="2" /></Sv></PanelTool>
            <PanelTool $w={22}><Sv s={16}><path d="M8 1L15 4L8 7L1 4ZM1 7.5L8 10.5L15 7.5M1 11L8 14.5L15 11" fill="#4f7fa8" stroke="#4f7fa8" strokeWidth="1.3" /></Sv></PanelTool>
            <PanelTool $w={23}><Sv s={16}><path d="M8 1L15 4L8 7L1 4ZM1 7.5L8 10.5L15 7.5M1 11L8 14.5L15 11" fill="#aaa" stroke="#aaa" strokeWidth="1.3" /></Sv></PanelTool>
            <PanelTool $w={21}><Sv s={16}><path d="M4 8C7 3 13 5 15 10" stroke="#4d8a86" strokeWidth="2.4" /><path d="M1 5L7 5L3 11Z" fill="#4d8a86" /></Sv></PanelTool>
            <PanelTool $w={23}><Sv s={16}><rect x="2.5" y="1.5" width="11" height="13" stroke="#6f8d93" /><path d="M5 4H11M5 7H11M5 10H11" stroke="#8a9ea4" /></Sv></PanelTool>
            <PanelTool $w={23}><Sv s={16}><circle cx="8" cy="8" r="4.5" stroke="#c49a55" strokeWidth="3.4" /><circle cx="8" cy="8" r="7" stroke="#c49a55" strokeWidth="1.6" strokeDasharray="2.5 3" /></Sv></PanelTool>
            <PanelTool $w={10}><Caret /></PanelTool>
            <PanelTool $w={24}><Sv s={16}><circle cx="8" cy="8" r="7.5" fill="#3f78ad" /><circle cx="8" cy="8" r="5.5" fill="#3f78ad" stroke="#fff" /><text x="8" y="11.5" textAnchor="middle" fontSize="9" fontWeight="700" fill="#fff" fontFamily="Liberation Sans">?</text></Sv></PanelTool>
          </PanelTools>
          <Table>
            <HeaderRow>
              <HeaderCell>号码<Sv s={8}><path d="M0 6H8L4 2Z" fill="#888" /></Sv></HeaderCell>
              <HeaderCell>高亮</HeaderCell>
              <HeaderCell>名称</HeaderCell>
              <HeaderCell>层别设置</HeaderCell>
              <HeaderCell>图素</HeaderCell>
              <HeaderCell />
            </HeaderRow>
            {rows.map(r => (
              <DataRow key={r[0]}>
                <DataCell $pl={22}>{r[0] === '4' && <Check>✓</Check>}{r[0]}</DataCell>
                <DataCell $pl={6}>{r[1]}</DataCell>
                <DataCell /><DataCell />
                <DataCell $pl={6}>{r[2]}</DataCell>
                <DataCell />
              </DataRow>
            ))}
            {blank.map((_, i) => (
              <DataRow key={i}><DataCell /><DataCell /><DataCell /><DataCell /><DataCell /><DataCell /></DataRow>
            ))}
          </Table>
          <Form>
            <FormLabel $h={31}>编号:</FormLabel>
            <FormField $h={31}><Input $w={70} $y>4</Input></FormField>
            <FormLabel $h={33}>名称:</FormLabel>
            <FormField $h={33}><Input $w={171} /></FormField>
            <FormLabel $h={33}>层别设置:</FormLabel>
            <FormField $h={33}><Input $w={171} /></FormField>
            <FormLabel $h={100}>显示:</FormLabel>
            <FormField $h={100}>
              <Radios>
                <RadioRow><Radio />已使用</RadioRow>
                <RadioRow><Radio />已命名</RadioRow>
                <RadioRow><Radio $on />已使用或已命名</RadioRow>
                <RadioRow><Radio />范围</RadioRow>
              </Radios>
              <RangeRow>
                <RangeInput $w={60}>1</RangeInput>
                <RangeInput $w={62}>100</RangeInput>
              </RangeRow>
            </FormField>
          </Form>
          <PanelTabs>
            <PanelTab $ml={0}>刀路</PanelTab>
            <PanelTab $ml={13}>实体</PanelTab>
            <PanelTab $ml={13}>平面</PanelTab>
            <PanelTab $ml={7} $on>层别</PanelTab>
            <PanelTab $ml={7}>最近使用功能</PanelTab>
          </PanelTabs>
        </Panel>
        <Splitter />
        <Viewport>
          <Model />
          <FloatBar>
            <FloatIcon $w={22}><Sv s={16}><rect x="3" y="7" width="10" height="8" fill="#b8bfc6" /><path d="M5 7V4a3 3 0 0 1 6 0" stroke="#b8bfc6" strokeWidth="1.5" /></Sv></FloatIcon>
            <FloatIcon $w={21}><FloatSelect /></FloatIcon>
            <FloatText>光标</FloatText>
            <FloatIcon $w={16}><Caret /></FloatIcon>
            <FloatIcon $w={22}><Sv s={20}><path d="M10 2V8M7 5H13" stroke="#5a86ac" strokeWidth="1.5" /><text x="10" y="18" textAnchor="middle" fontSize="9" fill="#555" fontFamily="Liberation Sans">XYZ</text></Sv></FloatIcon>
            <FloatIcon $w={24}><Sv s={18}><CrossAt x={3} y={3} r={3} /><circle cx="11" cy="11" r="4" stroke="#b09560" strokeWidth="3" /></Sv></FloatIcon>
            <FloatIcon $w={18}><Sv s={16}><path d="M4 1L13 9H9L11 15L8 15L6 10L4 12Z" fill="#9099a2" /></Sv></FloatIcon>
            <FloatGap $w={5} />
            {[0, 1, 2, 3].map(i => <FloatIcon key={i} $w={21.5}><FloatCube /></FloatIcon>)}
            <FloatIcon $w={23}><Sv s={20}><path d="M10 1L18 5V15L10 19L2 15V5Z" fill="#d8c49a" /><path d="M10 9L18 5V15L10 19Z" fill="#5a86ac" /></Sv></FloatIcon>
            <FloatIcon $w={22}><FloatSelect /></FloatIcon>
            <FloatIcon $w={14}><Caret /></FloatIcon>
            <FloatIcon $w={26}><Sv s={16}><rect x="1" y="1" width="14" height="14" fill="#d8c9a4" stroke="#666" strokeDasharray="2 1.5" /></Sv></FloatIcon>
            <FloatIcon $w={10}><Caret /></FloatIcon>
            <FloatGap $w={3} />
            <FloatIcon $w={21} $on><Sv s={18}><circle cx="7" cy="7" r="5.5" stroke="#9cb0c0" strokeWidth="1.5" /><circle cx="7" cy="7" r="2" fill="#9cb0c0" /><circle cx="13" cy="13" r="3.5" stroke="#c8d2da" /></Sv></FloatIcon>
            <FloatGap $w={5} />
            <FloatIcon $w={20}><Sv s={18}><path d="M2 1L9 7H6L7 11L5 11L4 8L2 9Z" fill="#555" /><rect x="8" y="9" width="8" height="8" stroke="#6d9486" /></Sv></FloatIcon>
            <FloatIcon $w={20}><Sv s={18}><path d="M3 9A6 6 0 0 1 15 6M15 9A6 6 0 0 1 3 12" stroke="#555" strokeWidth="1.4" /><path d="M7 6L13 11H10L11 15H9L8 12L7 13Z" fill="#444" /></Sv></FloatIcon>
            <FloatIcon $w={20}><Sv s={18}><path d="M2 6L8 3V9ZM5 6H11" fill="#6d9486" stroke="#6d9486" /><path d="M8 7L15 13H12L13 17H11L10 14L8 15Z" fill="#444" /></Sv></FloatIcon>
          </FloatBar>
          <Rail>
            {rail.map((r, i) => <RailBtn key={i}><Sv s={24}>{r}</Sv></RailBtn>)}
          </Rail>
          <NetWidget>
            <NetPill>
              <NetArrow $top={6} $c="#2e9ad8">↑</NetArrow>
              <NetArrow $top={23} $c="#e0a030">↓</NetArrow>
              <NetRow $top={5}>0 K/s</NetRow>
              <NetRow $top={22}>0 K/s</NetRow>
            </NetPill>
            <NetCircle><NetPct>48<small>%</small></NetPct></NetCircle>
            <Crown width="22" height="24" viewBox="0 0 20 22">
              <path d="M3 12L2 3L7 7L11 0L14 6L18 4L17 12Z" fill="#eeb53a" />
              <rect x="0" y="11" width="18" height="9" fill="#f4dd98" transform="skewX(-8) translate(2 0)" />
              <text x="9" y="19" textAnchor="middle" fontSize="8" fontWeight="700" fontStyle="italic" fill="#6b4a10" fontFamily="Liberation Sans">VIP</text>
            </Crown>
          </NetWidget>
          <ImeBar>
            <ImeItem $w={24}>A</ImeItem>
            <ImeItem $w={24}><Sv s={16}><circle cx="5" cy="7" r="1.6" fill="#1a6fc4" /><path d="M11 8C12 8 12 12 10 14" stroke="#1a6fc4" strokeWidth="2" /></Sv></ImeItem>
            <ImeItem $w={24}><Sv s={18}><rect x="6" y="1" width="6" height="10" rx="3" fill="#1a6fc4" /><path d="M3 8C3 15 15 15 15 8M9 13V17M6 17H12" stroke="#1a6fc4" strokeWidth="1.4" /></Sv></ImeItem>
            <ImeItem $w={24}><Sv s={18}><rect x="1" y="3" width="16" height="12" rx="1.5" fill="#1a6fc4" /><path d="M3.5 6.5H14.5M3.5 9H14.5M5 12H13" stroke="#fff" strokeWidth="1.2" strokeDasharray="1.5 1" /></Sv></ImeItem>
            <ImeItem $w={24}><Sv s={18}><path d="M5 2L9 4L13 2L18 5L15 8L14 7V16H4V7L3 8L0 5Z" fill="#1a6fc4" /></Sv></ImeItem>
            <ImeItem $w={24}><Sv s={16}><rect x="1" y="1" width="6" height="6" rx="1.5" fill="#c48ac4" /><rect x="9" y="1" width="6" height="6" rx="1.5" fill="#e8a070" /><rect x="1" y="9" width="6" height="6" rx="1.5" fill="#e88080" /><rect x="9" y="9" width="6" height="6" rx="1.5" fill="#e89060" /></Sv></ImeItem>
          </ImeBar>
          <ImeLogo>S</ImeLogo>
          <ScaleBox>
            <ScaleTop>13.068 毫米</ScaleTop>
            <ScaleBot>公制</ScaleBot>
          </ScaleBox>
        </Viewport>
      </Main>

      <Status>
        <StatusCell $w={97}>截面视图: 关闭</StatusCell>
        <StatusCell $w={148}>选择的图素: 0</StatusCell>
        <StatusCell $w={107}><StatusKey $w={23}>X:</StatusKey>-7.18266</StatusCell>
        <StatusCell $w={101}><StatusKey $w={22}>Y:</StatusKey>60.62533</StatusCell>
        <StatusCell $w={91}><StatusKey $w={21}>Z:</StatusKey>0.00000<StatusCaret $c="#7d9ac4" /></StatusCell>
        <StatusCell $w={30}>3D</StatusCell>
        <StatusCell $w={113}>绘图平面: 俯视图<StatusCaret $c="#7d9ac4" /></StatusCell>
        <StatusCell $w={115}>刀具平面: 俯视图<StatusCaret $c="#7d9ac4" /></StatusCell>
        <StatusCell $w={93}>WCS: 俯视图<StatusCaret $c="#7d9ac4" /></StatusCell>
        <GlobeBtn><Globe v={0} /></GlobeBtn>
        <GlobeBtn><Globe v={1} /></GlobeBtn>
        <GlobeBtn><Globe v={2} /></GlobeBtn>
        <GlobeBtn $on><Sphere id="s1" /></GlobeBtn>
        <GlobeBtn><Sphere id="s2" /></GlobeBtn>
        <GlobeBtn><Sphere id="s3" half /></GlobeBtn>
      </Status>

      <Taskbar>
        <TaskIcon $w={48}><Sv s={16}><path d="M0 2.2L6.8 1.2V7.6H0ZM7.6 1.1L16 0V7.6H7.6ZM0 8.4H6.8V14.8L0 13.8ZM7.6 8.4H16V16L7.6 14.9Z" fill="#fff" /></Sv></TaskIcon>
        <TaskIcon $w={52}><Sv s={24}><path d="M2 4H10L12 7H22V20H2Z" fill="#e8b93c" /><path d="M2 9H22V21H2Z" fill="#f3d26c" /><rect x="8" y="15" width="8" height="6" fill="#3d87c8" /></Sv></TaskIcon>
        <TaskItem $w={160} $on>
          <Sv s={24}><path d="M1 16L5 3H10L12 8L17 3H23L20 16H16L18 8L12 14L9 9L6 16Z" fill="#d8323c" /><rect x="1" y="17" width="22" height="7" fill="#fff" /><text x="12" y="23.5" textAnchor="middle" fontSize="7.5" fontWeight="700" fill="#222" fontFamily="Liberation Serif">2022</text></Sv>
          C:\Users\Adminis...
        </TaskItem>
        <TaskItem $w={152}>
          <Sv s={24}><ellipse cx="10" cy="14" rx="9" ry="7" fill="#cfd8dc" /><circle cx="6" cy="12" r="2" fill="#3aa55a" /><circle cx="10" cy="10" r="2" fill="#e84d3d" /><circle cx="14" cy="12" r="2" fill="#3d87c8" /><path d="M12 20L22 2" stroke="#d8a040" strokeWidth="2.4" /></Sv>
          W3 - 画图
        </TaskItem>
        <Tray>
          <TrayIcon $w={24}><Sv s={14}><path d="M2 10L7 4L12 10" stroke="#e8ecee" strokeWidth="1.2" /></Sv></TrayIcon>
          <TrayIcon $w={24}><Sv s={18}><rect x="2" y="2" width="14" height="10" stroke="#e8ecee" /><path d="M9 12V16M5 16H13" stroke="#e8ecee" /><path d="M2 2H8V8H2" stroke="#e8ecee" /></Sv></TrayIcon>
          <TrayIcon $w={24}><Sv s={18}><path d="M2 7H5L9 3V15L5 11H2Z" stroke="#e8ecee" /><path d="M11 6C13 8 13 10 11 12M13 4C16 7 16 11 13 14" stroke="#e8ecee" /></Sv></TrayIcon>
          <TrayIcon $w={22}><TrayLetter>A</TrayLetter></TrayIcon>
          <TrayIcon $w={37}><Sv s={18}><rect x="1" y="1" width="16" height="16" rx="3" fill="#e8602c" /><text x="9" y="14" textAnchor="middle" fontSize="14" fontWeight="700" fontStyle="italic" fill="#fff" fontFamily="Liberation Sans">S</text></Sv></TrayIcon>
          <Clock>11:01<br />2021/6/28</Clock>
          <TrayIcon $w={40}><Sv s={16}><path d="M2 1H14V12H2Z" fill="#e8ecee" /><path d="M4 4H12M4 7H12M4 10H9" stroke="#22343f" /></Sv></TrayIcon>
        </Tray>
        <Watermark>UG爱好者论坛@BJJCLXJ</Watermark>
      </Taskbar>
    </Root>
  );
}
